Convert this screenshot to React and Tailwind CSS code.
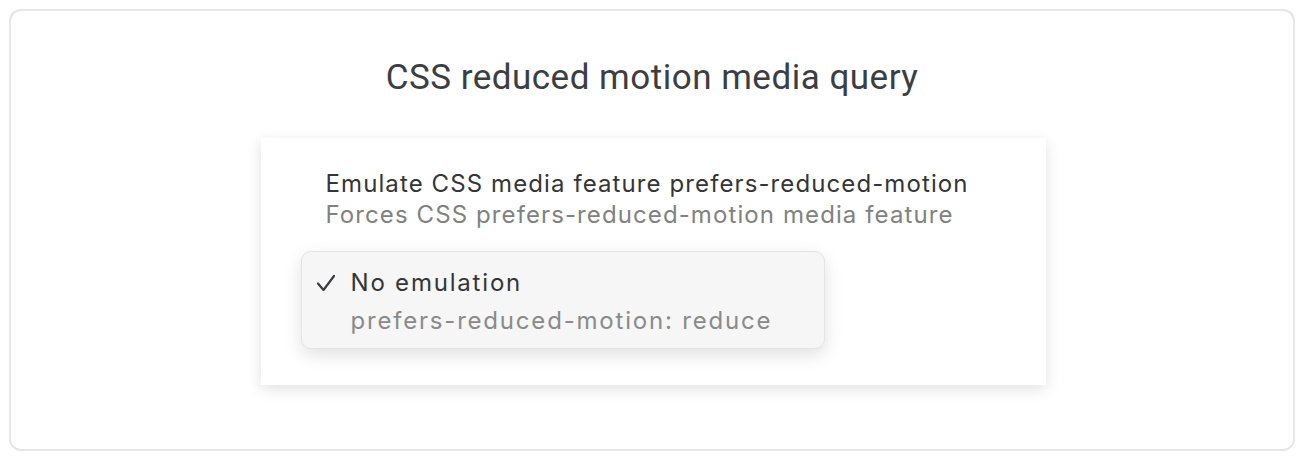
import React from "react";

const App = () => {
  return (
    <div className="w-[1304px] h-[460px] bg-white p-[9px]">
      <div className="h-full rounded-[12px] border-2 border-[#e6e6e6] flex flex-col items-center">
        <h1 className="mt-[46px] text-[35px] leading-[42px] tracking-[0.5px] text-[#3b3e42] font-['Roboto',sans-serif] font-normal">
          CSS reduced motion media query
        </h1>
        <div className="mt-[39px] ml-[2px] w-[785px] h-[247px] bg-white shadow-[0_4px_14px_rgba(0,0,0,0.12)] font-['Inter',sans-serif] pt-[30px]">
          <div className="pl-[65px] text-[24px] leading-[31px] tracking-[1.1px]">
            <p className="text-[#333538]">Emulate CSS media feature prefers-reduced-motion</p>
            <p className="text-[#818181]">Forces CSS prefers-reduced-motion media feature</p>
          </div>
          <div className="mt-[21px] ml-[40px] w-[524px] h-[98px] rounded-[10px] border border-[#e4e4e4] bg-[#f6f6f6] shadow-[0_6px_18px_rgba(0,0,0,0.12)] pt-[12px]">
            <div className="flex items-center h-[38px] text-[24px] tracking-[1.8px] text-[#333538]">
              <span className="w-[49px] pl-[14px] flex items-center">
                <svg width="20" height="18" viewBox="0 0 20 18" fill="none">
                  <path d="M2 9.5 L7.5 16 L18 2" stroke="#3a3c40" strokeWidth="2.2" strokeLinecap="round" strokeLinejoin="round" />
                </svg>
              </span>
              <span>No emulation</span>
            </div>
            <div className="flex items-center h-[38px] text-[24px] tracking-[1.8px] text-[#8a8a8a] pl-[49px]">
              prefers-reduced-motion: reduce
            </div>
          </div>
        </div>
      </div>
    </div>
  );
};

export default App;
